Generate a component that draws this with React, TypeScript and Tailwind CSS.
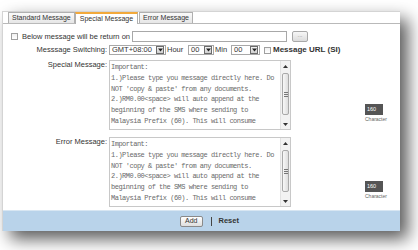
import React from 'react';

const message = `Important:
1.)Please type you message directly here. Do
NOT 'copy & paste' from any documents.
2.)RM0.00<space> will auto append at the
beginning of the SMS where sending to
Malaysia Prefix (60). This will consume
additional 7 characters from total word count.`;

const DropArrow = () => (
  <span className="flex h-[8px] w-[8px] items-center justify-center border border-[#6b6b6b] bg-gradient-to-b from-[#f4f4f4] to-[#cfcfcf]">
    <svg width="5" height="4" viewBox="0 0 5 4">
      <path d="M0 0.5 L5 0.5 L2.5 3.5 Z" fill="#222" />
    </svg>
  </span>
);

const Select = ({ value, width }: { value: string; width: string }) => (
  <div className={`flex h-[10px] items-center justify-between border border-[#a8a8a8] bg-white pl-[2px] pr-[1px] ${width}`}>
    <span className="text-[7.5px] leading-none text-[#333]">{value}</span>
    <DropArrow />
  </div>
);

const Checkbox = () => <span className="block h-[7px] w-[7px] border border-[#a0a0a0] bg-gradient-to-b from-[#f0f0f0] to-white" />;

const ScrollBar = () => (
  <div className="flex w-[10px] flex-col border-l border-[#e2e2e2] bg-[#f2f2f2]">
    <div className="flex h-[10px] items-center justify-center">
      <svg width="5" height="3" viewBox="0 0 5 3">
        <path d="M0 3 L5 3 L2.5 0 Z" fill="#333" />
      </svg>
    </div>
    <div className="mx-[1px] mt-[2px] flex h-[42px] flex-col items-center justify-center gap-[1px] rounded-[2px] border border-[#a9a9a9] bg-gradient-to-r from-[#f8f8f8] to-[#dedede]">
      <span className="h-px w-[4px] bg-[#777]" />
      <span className="h-px w-[4px] bg-[#777]" />
      <span className="h-px w-[4px] bg-[#777]" />
    </div>
    <div className="flex-1" />
    <div className="flex h-[10px] items-center justify-center">
      <svg width="5" height="3" viewBox="0 0 5 3">
        <path d="M0 0 L5 0 L2.5 3 Z" fill="#333" />
      </svg>
    </div>
  </div>
);

const MessageRow = ({ label }: { label: string }) => (
  <div className="flex">
    <div className="w-[106px] pr-[2px] pt-[1px] text-right text-[7.5px] leading-[8px] text-[#333]">{label}</div>
    <div className="flex h-[70px] w-[182px] border border-[#c8c8c8] bg-white">
      <div className="flex-1 overflow-hidden whitespace-pre pl-[1px] pt-[1px] font-['Liberation_Mono',monospace] text-[7px] leading-[10.8px] tracking-[-0.5px] text-[#6a6a6a]">
        {message}
      </div>
      <ScrollBar />
    </div>
    <div className="ml-[74px] mt-[44px] flex flex-col">
      <div className="h-[11px] w-[18px] bg-[#555] pl-[2px] text-[5.5px] leading-[11px] text-white">160</div>
      <div className="mt-[1px] text-[5px] leading-[6px] text-[#666]">Character</div>
    </div>
  </div>
);

export default function App() {
  return (
    <div className="h-[250px] w-[418px] overflow-hidden bg-white pl-[2px] pt-[11px] font-['Liberation_Sans',Arial,sans-serif]">
      <div className="flex h-[220px] w-[398px] flex-col border-l border-t border-[#d4d4d4] bg-white shadow-[8px_8px_16px_rgba(0,0,0,0.65)]">
        {/* tabs */}
        <div className="flex h-[12px] items-end border-b border-[#b9b9b9] pl-[5px]">
          <div className="flex h-[11px] items-center border border-b-0 border-[#b0b0b0] bg-gradient-to-b from-[#fafafa] to-[#e6e6e6] px-[3px] text-[7px] text-[#333]">
            Standard Message
          </div>
          <div className="-mb-px flex h-[12px] items-center border-x border-t-2 border-[#b0b0b0] border-t-[#f2a93b] bg-white px-[4px] text-[7px] text-[#333]">
            Special Message
          </div>
          <div className="ml-[1px] flex h-[11px] items-center border border-b-0 border-[#b0b0b0] bg-gradient-to-b from-[#fafafa] to-[#e6e6e6] px-[3px] text-[7px] text-[#333]">
            Error Message
          </div>
        </div>

        {/* body */}
        <div className="flex flex-1 flex-col pt-[7px]">
          <div className="flex h-[11px] items-center">
            <div className="ml-[8px]">
              <Checkbox />
            </div>
            <span className="ml-[4px] text-[7.5px] text-[#333]">Below message will be return on</span>
            <div className="ml-[2px] h-[11px] w-[155px] border border-[#a8a8a8] bg-white" />
            <div className="ml-[5px] flex h-[11px] w-[16px] items-center justify-center rounded-[2px] border border-[#a8a8a8] bg-gradient-to-b from-[#f7f7f7] to-[#dcdcdc] pb-[3px] text-[6px] text-[#888]">
              ...
            </div>
          </div>

          <div className="mt-[3px] flex h-[10px] items-center text-[7.5px] text-[#333]">
            <div className="w-[106px] pr-[2px] text-right">Messsage Switching:</div>
            <Select value="GMT+08:00" width="w-[57px]" />
            <span className="w-[22px] pl-[1px]">Hour</span>
            <Select value="00" width="w-[26px]" />
            <span className="w-[17px] pl-[1px]">Min</span>
            <Select value="00" width="w-[29px]" />
            <div className="ml-[4px]">
              <Checkbox />
            </div>
            <span className="ml-[2px] text-[8px] font-bold">Message URL (SI)</span>
          </div>

          <div className="mt-[5px] flex flex-col gap-[7px]">
            <MessageRow label="Special Message:" />
            <MessageRow label="Error Message:" />
          </div>
        </div>

        {/* footer */}
        <div className="flex h-[21px] items-center justify-center border-t border-[#d8e6f2] bg-[#b9d3ea] pl-[16px]">
          <div className="flex h-[11px] items-center rounded-[2px] border border-[#8a8a8a] bg-gradient-to-b from-white to-[#dedede] px-[4px] text-[7px] text-[#333]">
            Add
          </div>
          <span className="ml-[8px] h-[9px] w-px bg-[#444]" />
          <span className="ml-[7px] text-[7.5px] font-bold text-[#333]">Reset</span>
        </div>
      </div>
    </div>
  );
}
